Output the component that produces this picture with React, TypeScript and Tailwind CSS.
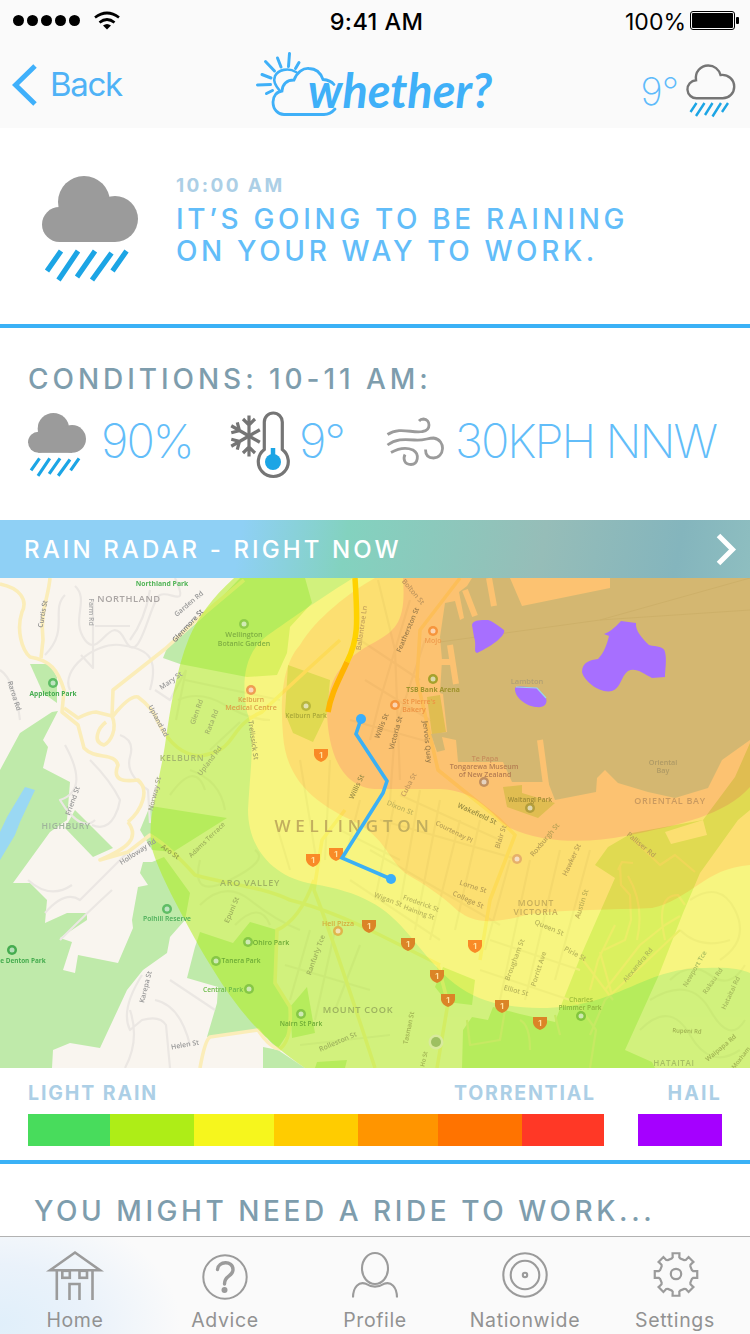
import React from "react";

function WeatherCloud({ className }: { className: string }) {
  return (
    <svg viewBox="42 176 96 106" className={className}>
      <g fill="#9b9b9b">
        <circle cx="59.5" cy="224.5" r="17.5" />
        <circle cx="84" cy="202" r="26" />
        <circle cx="115" cy="219" r="23" />
        <rect x="59" y="204" width="56" height="38" />
      </g>
      <g stroke="#1ca5e5" strokeWidth="5.2">
        <path d="M61 251 47 271M78 251 58.500 280M95 251 77 277M111.500 253 92 280M126.500 251 112.500 271" />
      </g>
    </svg>
  );
}

function NavCloud() {
  return (
    <svg viewBox="686 64 50 54" className="h-[54px] w-[50px]" fill="none">
      <path
        d="M697 98.300a9 9 0 0 1-1-18.100c-1.200-8 4.500-14.700 12.200-14.700 6 0 10.700 3.800 12.300 9.500 7.500-1 13.700 4.500 13.700 11.700 0 6.500-5 11.600-11.500 11.600z"
        stroke="#757575"
        strokeWidth="2.400"
      />
      <path d="M696.500 103l-6 9M704.500 103l-8.500 13M712.500 103l-7.500 12M721 103l-8.500 13.500M728 103l-6 9" stroke="#1ca5e5" strokeWidth="2.400" />
    </svg>
  );
}

function Logo() {
  return (
    <svg viewBox="250 48 250 72" className="h-[72px] w-[250px]" fill="none" stroke="#3fb0f8">
      <path
        d="M335 109c-3 3.500-7 5.500-11 5.500h-40c-6 0-11-5-11-12.500 0-6 4-10.500 9-11 .5-7 5-11 12-11 3-8 9-12 15-11.500 7 0 11.500 4 14 11 6 .5 9 2.500 11 5"
        strokeWidth="2.800"
        strokeLinecap="round"
      />
      <path d="M280 91c-5-6-7-10-5-15 3-6 13-9 21-4" strokeWidth="2.600" strokeLinecap="round" />
      <path d="M289.500 53.500l-1 13M277.500 58l3.500 9M265.500 61.500l9 9.500M262 74.500l9 3.500M257.500 85l13-.5M266.500 93.500l6-3M299 62.500l-3.500 6" strokeWidth="3" strokeLinecap="round" />
      <text
        x="308"
        y="108"
        textLength="184"
        lengthAdjust="spacingAndGlyphs"
        className="font-['Lato',sans-serif] text-[47px] font-bold italic"
        fill="#3fb0f8"
        stroke="none"
      >
        whether?
      </text>
    </svg>
  );
}

function ThermometerIcon() {
  return (
    <svg viewBox="230 410 60 68" className="h-[68px] w-[60px]" fill="none" stroke="#757575">
      <path d="M264.300 448.500v-27.500a9 9 0 0 1 18 0v27.500a15 15 0 1 1-18 0z" strokeWidth="3.200" />
      <path d="M273 447v10" stroke="#1ca5e5" strokeWidth="4.500" />
      <circle cx="273" cy="461" r="8" fill="#1ca5e5" stroke="none" />
      <g strokeWidth="3.200">
        {[0, 60, 120, 180, 240, 300].map((a) => (
          <path key={a} transform={`rotate(${a} 249 435)`} d={a === 60 || a === 120 ? "M249 435v-12.500" : "M249 435v-20.500M243 418l6 6 6-6"} />
        ))}
      </g>
    </svg>
  );
}

function WindIcon() {
  return (
    <svg viewBox="386 415 58 50" className="h-[50px] w-[58px]" fill="none" stroke="#9b9b9b" strokeWidth="2.800">
      <path d="M387.500 432.500c12-8 25-1 35-3 9-1.500 8-12 1-12.500-2 0-3.500.8-4.500 2" />
      <path d="M387.500 443c8-6 16-6 27-5 9 1 13-2 19-2 13 2 11 20 0 20-6 0-8-4-8-8.500" />
      <path d="M391 450.500c9-5 16-5 22-2.500 7 4 5 14.500-2 14.500-7 0-8-6-6-10" />
    </svg>
  );
}

const roads = [
  "M0 584C20 588 28 600 22 612C16 630 22 650 30 657C50 660 58 670 64 690L62 712L78 725L84 748C95 760 115 752 118 765C112 780 122 782 138 780C150 790 142 810 128 822",
  "M50 578C48 600 40 610 43 640L41 658",
  "M64 708L78 718Q90 712 96 712L112 716L113 690L165 649L200 617L244 580",
  "M113 716Q130 695 138 697Q153 708 158 722Q175 755 200 756C240 750 225 728 262 712Q285 690 340 640",
  "M112 716C118 730 110 742 104 745C92 742 98 728 106 722",
  "M128 822C140 838 128 848 100 860L128 852L150 835Q170 847 195 875C230 885 260 886 290 900Q330 910 380 935L440 965",
  "M200 1068Q205 1040 210 1037L258 1030Q270 1048 280 1049Q292 1040 290 1007L275 983L277 930Q300 920 314 880",
  "M345 810L322 840L314 890Q330 930 375 1068",
  "M460 578L420 630L417 680L438 770L500 820L515 835L490 900L480 960",
  "M438 965L448 1003L437 1068",
];

const streets = [
  "M75 586C90 600 70 620 85 640S110 610 125 640S150 600 160 595S190 610 175 578",
  "M93 600V668L81 655M95 626H130M130 640Q145 620 150 590",
  "M70 690C60 670 95 642 120 645S160 655 150 690M45 655C70 630 50 610 65 595",
  "M0 670Q15 680 20 720M65 745Q90 790 60 800S80 835 95 820M90 760Q110 780 120 800S115 835 92 825",
  "M120 735Q135 740 130 757T148 790L150 823M155 690L170 700L186 670M186 670L176 720",
  "M45 913Q65 890 80 900Q100 880 130 850M28 880Q50 900 72 885M60 940Q90 910 112 890",
  "M142 975Q120 1010 130 1030L142 1020Q160 1015 166 1025L170 1068M130 1010Q140 1040 125 1068M155 1000Q180 1005 190 1045M170 980L215 1010",
  "M185 680L280 700M178 700Q200 690 225 705T270 720M210 750L240 722M190 770Q220 780 225 810M170 795Q195 760 205 790M200 860Q190 900 230 880T255 850",
  "M200 905Q225 880 250 900T300 930M235 925Q260 900 270 925M310 930L290 1000M335 930L315 1020M360 945L335 1010M285 965L370 990M300 1045L390 1035",
  "M275 820L290 870M300 760L318 870M330 760L325 860M360 800L345 860M340 830L400 860M350 880L440 940M370 850L500 925M395 800L375 900M420 790L400 905M440 800L415 930",
  "M460 820L430 940M480 820L455 930M380 820L520 860M400 795L500 840M510 860L485 950M530 860L500 1000M560 850L525 1000M590 850L555 980M490 940L580 970M480 970L570 1000",
  "M378 580L395 650L400 780M410 600L380 700L370 740M425 640L395 730L390 800M360 640L420 680M365 680L430 720M350 720L440 745",
  "M690 900Q720 880 735 910T720 960M680 930Q700 950 730 940M670 980Q690 960 710 975T745 965M650 1000Q690 975 710 1010T745 1020M640 1030Q670 1000 690 1035T740 1050",
];

const parks = [
  "163 658 167 648 200 620 240 578 305 578 312 603 290 627 287 653 277 675 247 677 180 664",
  "30 664 50 664 57 677 57 703 43 693",
  "0 770 20 733 52 712 58 711 43 740 48 747 43 768 70 782 67 820 50 832 13 883 30 883 47 900 45 923 67 913 87 913 87 920 60 938 72 942 63 970 75 973 78 955 118 963 133 928 132 920 138 887 148 885 140 873 143 862 152 862 164 857 190 893 185 920 170 937 167 953 143 970 127 990 100 1048 70 1043 53 1050 52 1068 0 1068",
  "75 810 113 848 93 857 65 828",
  "150 806 157 807 227 818 173 852 152 850 140 830",
  "200 932 233 943 250 922 277 930 275 983 290 1007 288 1033 277 1050 267 1038 257 1030 207 1037 217 1003 218 987 187 978 195 947",
  "290 1007 307 987 315 1033 292 1038",
  "263 1047 263 1068 305 1068 278 1050",
  "317 1062 347 1060 345 1068 315 1068",
  "632 833 703 820 735 777 750 743 750 810 738 820 700 873 683 913 658 977 625 1050 652 1062 655 1068 462 1068 463 1030 472 1017 488 1020 493 1007 520 1014 555 1022 562 1003 582 953 615 878 595 865 608 847",
  "435 987 443 967 475 980 472 1005 447 1002",
  "288 665 330 680 327 713 313 742 293 733 285 713",
  "503 787 522 785 522 793 555 803 538 818 507 807",
  "427 697 440 695 446 732 432 735",
];

type Label = { t: string; x: number; y: number; s?: number; r?: number; c?: string; w?: number; sp?: number };
const labels: Label[] = [
  { t: "Northland Park", x: 162, y: 586, s: 6.8, c: "#52b457", w: 700 },
  { t: "NORTHLAND", x: 129, y: 602, s: 9.3, c: "#aaa5a3", sp: 0.6 },
  { t: "Curtis St", x: 43, y: 616, s: 6.8, r: -80, c: "#888" },
  { t: "Farm Rd", x: 91, y: 614, s: 6.8, r: 90, c: "#aaa" },
  { t: "Garden Rd", x: 189, y: 606, s: 7, r: -40, c: "#999" },
  { t: "Glenmore St", x: 188, y: 628, s: 7, r: -47, c: "#777" },
  { t: "Wellington", x: 244, y: 637, s: 7.2, c: "#7fae43" },
  { t: "Botanic Garden", x: 244, y: 645.5, s: 7, c: "#7fae43" },
  { t: "Appleton Park", x: 53, y: 696, s: 6.6, c: "#45ac4f", w: 700 },
  { t: "Raroa Rd", x: 14, y: 698, s: 7, r: 72, c: "#999" },
  { t: "Mary St", x: 171, y: 683, s: 7, r: -35, c: "#999" },
  { t: "Upland Rd", x: 158, y: 723, s: 7, r: 62, c: "#999" },
  { t: "Kelburn", x: 251, y: 701.5, s: 6.8, c: "#dda148" },
  { t: "Medical Centre", x: 251, y: 709.5, s: 7.1, c: "#dda148" },
  { t: "Kelburn Park", x: 306, y: 718, s: 6.6, c: "#a9a739" },
  { t: "KELBURN", x: 182, y: 761, s: 8.8, c: "#a5b86e", sp: 0.6 },
  { t: "Glen Rd", x: 197, y: 714, s: 7, r: -70, c: "#a3b46a" },
  { t: "Rata Rd", x: 212, y: 724, s: 7, r: -68, c: "#a3b46a" },
  { t: "Upland Rd", x: 210, y: 763, s: 7, r: -53, c: "#a3b46a" },
  { t: "Norway St", x: 155, y: 796, s: 7, r: -76, c: "#a5a58a" },
  { t: "Trelissick St", x: 253, y: 742, s: 7, r: 82, c: "#a0a060" },
  { t: "Friend St", x: 73, y: 803, s: 7, r: -70, c: "#999" },
  { t: "HIGHBURY", x: 66, y: 829, s: 8.7, c: "#9fb49b", sp: 0.5 },
  { t: "Holloway Rd", x: 138, y: 854, s: 7, r: -33, c: "#999" },
  { t: "Aro St", x: 170, y: 854, s: 7, r: 35, c: "#93a04d" },
  { t: "Adams Terrace", x: 207, y: 842, s: 6.6, r: -44, c: "#9fb35d" },
  { t: "ARO VALLEY", x: 250, y: 886, s: 9, c: "#a0b363", sp: 0.7 },
  { t: "Polhill Reserve", x: 167, y: 921, s: 6.8, c: "#49ad58" },
  { t: "e Denton Park", x: 23, y: 963, s: 6.4, c: "#45ac4f", w: 700 },
  { t: "Epuni St", x: 232, y: 912, s: 7, r: -67, c: "#9fb35d" },
  { t: "Ohiro Park", x: 271, y: 945, s: 7, c: "#6dab36" },
  { t: "Tanera Park", x: 241, y: 963, s: 6.7, c: "#6dab36" },
  { t: "Central Park", x: 223, y: 992, s: 6.7, c: "#6dbb4a" },
  { t: "Nairn St Park", x: 301, y: 1026, s: 6.7, c: "#6dab36" },
  { t: "Hell Pizza", x: 338, y: 926, s: 7, c: "#d5ae3d" },
  { t: "Karepa St", x: 146, y: 989, s: 7, r: -76, c: "#999" },
  { t: "Helen St", x: 185, y: 1047, s: 7, r: -10, c: "#999" },
  { t: "MOUNT COOK", x: 358, y: 1013, s: 9.2, c: "#9db25f", sp: 0.7 },
  { t: "Ranfurly Tce", x: 316, y: 957, s: 7, r: -70, c: "#9fb35d" },
  { t: "Rolleston St", x: 338, y: 1044, s: 7, r: -23, c: "#9fb35d" },
  { t: "WELLINGTON", x: 354, y: 832, s: 17, c: "#c2ae5e", sp: 4.8 },
  { t: "Featherston St", x: 408, y: 632, s: 6.8, r: -67, c: "#9b7c4b" },
  { t: "Jervois Quay", x: 427, y: 744, s: 7, r: 84, c: "#9b7c4b" },
  { t: "Victoria St", x: 396, y: 735, s: 7, r: -75, c: "#9b7c4b" },
  { t: "Willis St", x: 382, y: 728, s: 7, r: -68, c: "#9b7c4b" },
  { t: "Willis St", x: 357, y: 789, s: 7, r: -65, c: "#9a8d48" },
  { t: "Bolton St", x: 413, y: 594, s: 7, r: 50, c: "#c0965d" },
  { t: "Ballantrae Ln", x: 362, y: 630, s: 7, r: -82, c: "#c4a25c" },
  { t: "Cuba St", x: 409, y: 787, s: 7, r: -62, c: "#c4995e" },
  { t: "TSB Bank Arena", x: 433, y: 692, s: 6.8, c: "#9f932d", w: 700 },
  { t: "St Pierre's", x: 419, y: 703.5, s: 6.8, c: "#ed9343" },
  { t: "Bakery", x: 414, y: 711.5, s: 7, c: "#ed9343" },
  { t: "Mojo", x: 433, y: 643, s: 7, c: "#ee9b4e" },
  { t: "Lambton", x: 527, y: 684, s: 7.5, c: "#b2a174" },
  { t: "Te Papa", x: 485, y: 761, s: 7, c: "#c78e5c" },
  { t: "Tongarewa Museum", x: 484, y: 769, s: 7, c: "#b47d52" },
  { t: "of New Zealand", x: 485, y: 777, s: 7, c: "#b47d52" },
  { t: "Oriental", x: 663, y: 764.500, s: 7.2, c: "#af9a65" },
  { t: "Bay", x: 663, y: 772.800, s: 7.2, c: "#af9a65" },
  { t: "ORIENTAL BAY", x: 670, y: 804, s: 9, c: "#c99a60", sp: 0.7 },
  { t: "Waitangi Park", x: 530, y: 802, s: 6.6, c: "#a18c36" },
  { t: "Wakefield St", x: 477, y: 816, s: 7, r: 25, c: "#998c42" },
  { t: "Dixon St", x: 400, y: 810, s: 7, r: 22, c: "#c1b35c" },
  { t: "Courtenay Pl", x: 454, y: 834, s: 6.6, r: 27, c: "#baa155" },
  { t: "Blair St", x: 501, y: 839, s: 7, r: -72, c: "#baa155" },
  { t: "Roxburgh St", x: 545, y: 842, s: 7, r: -50, c: "#baa155" },
  { t: "Hawker St", x: 572, y: 862, s: 7, r: -65, c: "#baa155" },
  { t: "Lorne St", x: 473, y: 889, s: 7, r: 18, c: "#baa155" },
  { t: "College St", x: 468, y: 902, s: 7, r: 24, c: "#baa155" },
  { t: "MOUNT", x: 536, y: 905.5, s: 8.5, c: "#c6ae5b", sp: 0.8 },
  { t: "VICTORIA", x: 536, y: 915, s: 8.5, c: "#c6ae5b", sp: 0.8 },
  { t: "Austin St", x: 582, y: 906, s: 7, r: -72, c: "#bcae55" },
  { t: "Queen St", x: 549, y: 930, s: 7, r: 23, c: "#bab75b" },
  { t: "Wigan St", x: 388, y: 902, s: 7, r: 20, c: "#bab75b" },
  { t: "Frederick St", x: 421, y: 905.5, s: 6.6, r: 20, c: "#bab75b" },
  { t: "Haining St", x: 419, y: 914.500, s: 6.6, r: 20, c: "#bab75b" },
  { t: "Pirie St", x: 575, y: 956, s: 7, r: 28, c: "#bab75b" },
  { t: "Brougham St", x: 515, y: 962, s: 7, r: -69, c: "#bab75b" },
  { t: "Porritt Ave", x: 539, y: 971, s: 7, r: -72, c: "#bab75b" },
  { t: "Elliot St", x: 516, y: 993, s: 7, r: 15, c: "#bab75b" },
  { t: "Charles", x: 581, y: 1002, s: 6.6, c: "#9fbe3b" },
  { t: "Plimmer Park", x: 580, y: 1009.5, s: 6.6, c: "#8fb63b" },
  { t: "Alexandra Rd", x: 638, y: 967, s: 6.6, r: -50, c: "#aeb959" },
  { t: "Palliser Rd", x: 641, y: 847, s: 7, r: 40, c: "#baa155" },
  { t: "Newport Tce", x: 695, y: 971, s: 6.6, r: -60, c: "#a6bb5d" },
  { t: "Rakau Rd", x: 713, y: 983, s: 6.6, r: -55, c: "#a6bb5d" },
  { t: "Hataitai Rd", x: 731, y: 995, s: 6.6, r: -65, c: "#a6bb5d" },
  { t: "Rupeni Rd", x: 687, y: 1033, s: 6, r: 3, c: "#a0b353" },
  { t: "Waipapa Rd", x: 721, y: 1050, s: 6.6, r: -40, c: "#a0b353" },
  { t: "Moxham", x: 741, y: 1060, s: 6.2, r: -52, c: "#a0b353" },
  { t: "HATAITAI", x: 674, y: 1066, s: 8, c: "#a6bf64", sp: 0.7 },
  { t: "Tasman St", x: 409, y: 1030, s: 6.6, r: -78, c: "#a0b353" },
  { t: "Ho St", x: 424, y: 1061, s: 6, r: -78, c: "#a0b353" },
];

const shields = [
  [321, 755, 1], [313, 860, 1], [336, 854, 1], [369, 926, 0], [408, 944, 0], [437, 976, 0],
  [448, 1000, 0], [475, 946, 1], [502, 1006, 0], [540, 1023, 0],
];

const pins: [number, number, string][] = [
  [53, 683, "#5fbd65"], [244, 624, "#8fcc4a"], [306, 706, "#b8b73c"], [251, 690, "#ef9d52"], [433, 631, "#f6953c"],
  [433, 679, "#a5a12c"], [395, 705, "#f6953c"], [167, 909, "#5fbd65"], [12, 950, "#45ac4f"], [248, 942, "#86c746"],
  [216, 961, "#86c746"], [249, 989, "#86c746"], [301, 1014, "#86c746"], [338, 931, "#e0b54a"], [530, 808, "#b39e3c"],
  [484, 782, "#c18f60"], [517, 859, "#e6b06a"], [581, 1016, "#82c63d"],
];

function RadarMap() {
  return (
    <svg viewBox="0 578 750 490" className="block h-[490px] w-full shrink-0">
      <rect x="0" y="578" width="750" height="490" fill="#f9f5ef" />
      <g className="blur-[0.6px]">
        {parks.map((p) => (
          <polygon key={p} points={p} fill="#bfeaaa" />
        ))}
        <polygon points="665,832 703,820 707,835 671,844" fill="#f9f5ef" />
        <polygon points="25,787 35,790 20,822 15,835 0,860 0,832 7,817" fill="#9ad8f3" />
        <g fill="none" strokeLinejoin="round">
          {streets.map((d) => (
            <path key={d} d={d} stroke="#ebe7e3" strokeWidth="2.200" />
          ))}
          {roads.map((d) => (
            <path key={d} d={d} stroke="#fbedb9" strokeWidth="3.600" />
          ))}
          <path
            d="M618 870L622 862L633 863M620 865L621 885L630 895L631 920L625 940L604 950M628 876Q645 905 637 940M605 990L640 945L665 925L680 916M665 940Q655 895 678 895L685 905M583 960L613 1000M590 990L598 960L615 925M600 952L612 995M575 1000L596 1030L590 1068M555 1015L560 1035M505 1010L500 1040L470 1045L467 1020M520 1020Q530 1025 530 1050M632 838L660 865L675 855L695 872M590 1035L605 1000L680 930"
            stroke="#dfe4b8"
            strokeWidth="2.200"
          />
        </g>
        <path
          d="M472 578H510L522 606 610 588V578H750V740L722 760 708 788 675 798 648 792 618 783 605 770 597 778 596 792 555 800 548 782 512 782 503 762H458L456 740 442 737 445 750 437 752 431 734 447 732 443 694 440 693 442 660 440 637 445 603 455 601 460 620 464 618 459 592 467 586Z"
          fill="#a5deee"
        />
        <path d="M465 590L475 616M489 578L494 606M450 645L456 684M441 662H454M540 740L546 785" stroke="#f9f5ef" strokeWidth="6" fill="none" />
        <path d="M440 642L600 620L750 610M600 620L750 578" stroke="#98cedd" strokeWidth="1" fill="none" />
      </g>
      <g opacity="0.520">
        <path
          d="M234 578C212 598 198 617 189 638C176 670 170 710 165 745C158 790 145 825 153 852C162 880 185 920 200 948C225 990 250 1032 305 1068H750V578Z"
          fill="#aeee16"
        />
        <path
          d="M353 578C310 605 290 620 268 635C240 655 243 690 247 712C256 735 250 770 248 810C248 850 275 878 313 884C360 892 385 905 410 936C450 985 470 1007 540 1008C620 1008 640 968 705 968C725 967 740 968 750 973V578Z"
          fill="#f6f61c"
        />
        <path
          d="M375 578C350 592 316 618 300 645C282 665 280 700 283 735C286 780 315 802 347 818C385 835 385 855 405 873C425 885 440 894 458 911C475 923 490 925 530 914C570 909 610 910 652 908C690 900 705 868 750 865V578Z"
          fill="#ffcc00"
        />
        <path
          d="M403 578C406 620 397 630 375 642C345 658 328 675 327 712C328 750 340 787 375 789H440C480 791 490 815 510 828C545 844 590 843 625 836C680 825 725 815 750 787V578Z"
          fill="#ff9500"
        />
      </g>
      <path d="M355 578C358 625 358 640 347 662" stroke="#ffd200" strokeWidth="5.500" fill="none" />
      <path d="M347 662C338 682 331 694 328 712" stroke="#ffb400" strokeWidth="5.500" fill="none" />
      <g className="blur-[0.700px]">
        {pins.map(([x, y, c]) => (
          <g key={`${x}-${y}`}>
            <circle cx={x} cy={y} r="5" fill={c} />
            <circle cx={x} cy={y} r="2.500" fill="#fff" opacity="0.600" />
          </g>
        ))}
        <circle cx="436" cy="1042" r="7.500" fill="#d8ea9d" />
        <circle cx="436" cy="1042" r="5" fill="#9dc061" />
        {labels.map((l, i) => (
          <text
            key={i}
            x={l.x}
            y={l.y}
            textAnchor="middle"
            transform={l.r ? `rotate(${l.r} ${l.x} ${l.y - 2})` : undefined}
            fontSize={l.s}
            fontWeight={l.w ?? 600}
            letterSpacing={l.sp ?? 0}
            fill={l.c}
            className="font-['Open_Sans',sans-serif]"
          >
            {l.t}
          </text>
        ))}
        {shields.map(([x, y, bright]) => (
          <g key={`${x}-${y}`}>
            <path d={`M${x - 7} ${y - 6}H${x + 7}V${y}Q${x + 6} ${y + 5} ${x} ${y + 7}Q${x - 6} ${y + 5} ${x - 7} ${y}Z`} fill={bright ? "#f98a27" : "#db8427"} />
            <text x={x} y={y + 3} textAnchor="middle" fontSize="8" fontWeight="700" fill="#ffe1a0" className="font-['Inter',sans-serif]">
              1
            </text>
          </g>
        ))}
      </g>
      <g fill="#a76fff">
        <path d="M472 625C473 619 484 620 488 620C492 621 500 627 504 630C506 635 494 645 477 653C473 652 477 645 474 637Z" />
        <path d="M515 688C517 685 530 687 537 688L546 698C548 704 544 708 536 707C526 706 514 697 515 688Z" />
        <path d="M604 634Q611 632 621 621L636 623C635 631 643 639 649 645C657 647 664 646 665 652C667 660 665 670 665 677L652 678C643 673 635 667 628 671C621 676 621 688 612 691C600 694 584 681 582 672C582 662 590 660 598 659C604 653 607 644 609 636Z" />
      </g>
      <path d="M516 687L537 688L546 698" fill="none" stroke="#9ad8e5" strokeWidth="1.200" />
      <path d="M361 719L356 734L387 781L383 793L342 858L391 879" fill="none" stroke="#3bb0f4" strokeWidth="3.600" />
      <circle cx="361" cy="719" r="5" fill="#3aaefa" />
      <circle cx="391" cy="879" r="5" fill="#3aaefa" />
    </svg>
  );
}

function gearPath(cx: number, cy: number) {
  const pts: string[] = [];
  for (let i = 0; i < 8; i++) {
    const base = (i * Math.PI) / 4;
    const steps: [number, number][] = [[-0.27, 16.5], [-0.19, 17.5], [-0.16, 21.5], [0.16, 21.5], [0.19, 17.5], [0.27, 16.5]];
    for (const [a, r] of steps) {
      pts.push(`${(cx + r * Math.sin(base + a)).toFixed(2)} ${(cy - r * Math.cos(base + a)).toFixed(2)}`);
    }
  }
  return `M${pts.join("L")}Z`;
}

const tabs = [
  {
    name: "Home",
    icon: (
      <g strokeWidth="2.600">
        <path d="M5 20.300 30 2.500 55 20.300zM11.800 20v30M47.500 20v30M24.500 50V34h10v16" />
        <rect x="17.300" y="20.800" width="7.500" height="7" />
        <rect x="34.500" y="20.800" width="7.500" height="7" />
      </g>
    ),
  },
  {
    name: "Advice",
    icon: (
      <g>
        <circle cx="30" cy="27" r="21.700" strokeWidth="2" />
        <path d="M22.500 19.500C23 11 38 10 38 19.500C38 27 29.500 25 29.500 34" strokeWidth="3.400" strokeLinecap="round" />
        <circle cx="29.500" cy="40" r="3" fill="#9b9b9b" stroke="none" />
      </g>
    ),
  },
  {
    name: "Profile",
    icon: (
      <g strokeWidth="2.100">
        <ellipse cx="30" cy="18.500" rx="13" ry="15.500" />
        <path d="M8 47.500C8 37 14 31 21 33.800C27 37.500 33 37.500 39 33.800C46 31 52 37 52 47.500" />
      </g>
    ),
  },
  {
    name: "Nationwide",
    icon: (
      <g strokeWidth="2.100">
        <circle cx="30" cy="25" r="21.700" />
        <circle cx="30" cy="25" r="14.300" />
        <circle cx="30" cy="25" r="2.200" />
      </g>
    ),
  },
  {
    name: "Settings",
    icon: (
      <g strokeWidth="2.200">
        <path d={gearPath(31, 24.5)} />
        <circle cx="31" cy="24" r="5.200" />
      </g>
    ),
  },
];

const bands = [
  "w-[82px] bg-[#48dc5c]",
  "w-[84px] bg-[#aeed17]",
  "w-[80px] bg-[#f6f61d]",
  "w-[84px] bg-[#ffcc00]",
  "w-[80px] bg-[#ff9500]",
  "w-[84px] bg-[#ff7300]",
  "w-[82px] bg-[#ff3826]",
];

export default function App() {
  return (
    <div className="flex h-[1334px] w-[750px] flex-col overflow-hidden bg-white font-['Inter',sans-serif] whitespace-nowrap">
      <header className="h-32 shrink-0 bg-[#fafafa]">
        <div className="grid h-10 grid-cols-3 items-center pr-2.5 pl-[13px] text-black">
          <svg viewBox="13 8 108 24" className="h-6 w-[108px]">
            {[18.5, 32.500, 46.500, 60.500, 74.500].map((x) => (
              <circle key={x} cx={x} cy="20.500" r="5.500" />
            ))}
            <g fill="none" stroke="#000" strokeWidth="2.700">
              <path d="M95 17.500Q107 8.500 119 17.500" />
              <path d="M99.500 22.500Q107 16.500 114.500 22.500" />
            </g>
            <path d="M103 25.500Q107 22.500 111 25.500L107 29.500Z" />
          </svg>
          <div className="pt-1 text-center text-[23.500px] leading-8 font-medium tracking-[0.400px]">9:41 AM</div>
          <div className="flex items-center justify-end gap-1">
            <span className="pt-1 text-[23px] leading-8">100%</span>
            <svg viewBox="690 11 50 19" className="h-[19px] w-[50px]">
              <rect x="690.500" y="11.500" width="44" height="18" rx="2.500" fill="none" stroke="#000" />
              <rect x="692" y="13" width="41" height="15" rx="1" />
              <rect x="736" y="17" width="3" height="7" rx="1" />
            </svg>
          </div>
        </div>
        <div className="flex h-[88px] items-start justify-between text-[#4fb2f6]">
          <div className="flex w-[250px] items-center pt-6 pl-3">
            <svg viewBox="12 64 26 42" className="h-[42px] w-[26px]" fill="none">
              <path d="M35 66 15.500 85 35 104" stroke="#3fb0fb" strokeWidth="5" />
            </svg>
            <span className="pb-0.5 pl-[12px] text-[33px] leading-[40px] tracking-[-1.300px]">Back</span>
          </div>
          <div className="pt-2">
            <Logo />
          </div>
          <div className="flex w-[250px] items-center justify-end pt-6 pr-3.5">
            <span className="pr-2 text-[38px] leading-[54px] font-extralight tracking-[-1px] text-[#5fbbfa]">9°</span>
            <NavCloud />
          </div>
        </div>
      </header>

      <section className="flex h-[200px] shrink-0 items-start border-b-4 border-[#3ab1f6] pt-12 pl-[42px]">
        <WeatherCloud className="h-[106px] w-24" />
        <div className="pt-px pl-[38px]">
          <p className="text-[19px] leading-[18px] font-bold tracking-[2.400px] text-[#accfe6]">10:00 AM</p>
          <h1 className="pt-2 text-[28px] leading-8 font-medium tracking-[3.650px] text-[#62bdf9]">
            IT’S GOING TO BE RAINING
            <br />
            ON YOUR WAY TO WORK.
          </h1>
        </div>
      </section>

      <section className="h-48 shrink-0 pt-[35px] pl-7">
        <h2 className="text-[28px] leading-8 font-medium tracking-[3.950px] text-[#7e9dad]">CONDITIONS: 10-11 AM:</h2>
        <div className="flex h-[66px] items-center pt-4 text-[47px] font-[250] text-[#62bdf9]">
          <WeatherCloud className="mt-[17px] h-16 w-[58px]" />
          <span className="w-[144px] pt-[11px] pl-[15px] tracking-[-2px]">90%</span>
          <div className="mt-[17px]">
            <ThermometerIcon />
          </div>
          <span className="w-[96px] pt-[11px] pl-[9px] tracking-[-2px]">9°</span>
          <div className="mt-[11px]">
            <WindIcon />
          </div>
          <span className="pt-[11px] pl-[11px] tracking-[-2px]">30KPH NNW</span>
        </div>
      </section>

      <section className="flex h-[58px] shrink-0 items-center justify-between bg-[linear-gradient(100deg,#8fd0f5_0%,#8fd0f5_32%,#83d2bf_46%,#96bdb8_72%,#84b5bd_90%,#8ebec0_100%)] pr-3 pl-6 text-white">
        <h2 className="pt-0.5 text-[24px] font-medium tracking-[3.100px]">RAIN RADAR - RIGHT NOW</h2>
        <svg viewBox="716 533 22 33" className="h-[33px] w-[22px]" fill="none">
          <path d="M718.500 535.500 732.500 549.500 718.500 563.500" stroke="#fff" strokeWidth="5" />
        </svg>
      </section>

      <RadarMap />

      <section className="h-24 shrink-0 border-b-4 border-[#3ab1f6] pr-7 pl-7">
        <div className="flex h-[46px] items-center pt-1.5 text-[19.500px] font-bold text-[#accfe6]">
          <span className="w-[427px] tracking-[1.900px]">LIGHT RAIN</span>
          <span className="w-[214px] tracking-[1.800px]">TORRENTIAL</span>
          <span className="tracking-[2.200px]">HAIL</span>
        </div>
        <div className="flex h-8">
          {bands.map((b) => (
            <div key={b} className={b} />
          ))}
          <div className="ml-auto w-[84px] bg-[#a500ff]" />
        </div>
      </section>

      <section className="h-[72px] shrink-0 pt-[31px] pl-[34px]">
        <h2 className="text-[28px] leading-8 font-medium tracking-[3.550px] text-[#7e9dad]">YOU MIGHT NEED A RIDE TO WORK...</h2>
      </section>

      <nav className="grid h-[98px] shrink-0 grid-cols-5 border-t border-[#b2b2b2] bg-[#fafafa] bg-[radial-gradient(ellipse_180px_120px_at_0%_90%,#e0effa_0%,#eaf2fa_50%,#fafafa_100%)]">
        {tabs.map((t) => (
          <div key={t.name} className="flex flex-col items-center pt-[13px] text-[#929292]">
            <svg viewBox="0 0 60 50" className="h-[50px] w-[60px]" fill="none" stroke="#9b9b9b">
              {t.icon}
            </svg>
            <span className="pt-2 text-[19.500px] leading-6 tracking-[0.650px]">{t.name}</span>
          </div>
        ))}
      </nav>
    </div>
  );
}
